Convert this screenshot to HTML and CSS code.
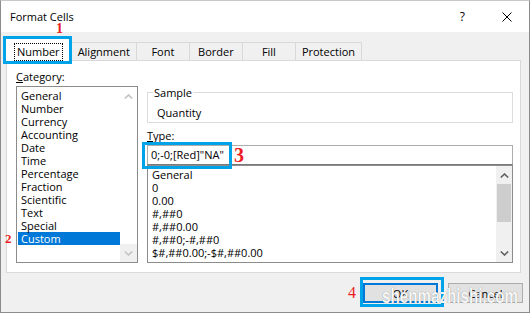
FILE: index.html
```html
<!DOCTYPE html>
<html lang="en">
<head>
    <meta charset="UTF-8">
    <meta name="viewport" content="width=device-width, initial-scale=1.0">
    <title>Format Cells</title>
    <link rel="stylesheet" href="styles.css">
</head>
<body>
    <div class="dialog">
        <div class="titlebar">
            <span class="title">Format Cells</span>
            <span class="help">?</span>
            <svg class="close" width="10" height="10" viewBox="0 0 10 10">
                <path d="M0.5 0.5 L9.5 9.5 M9.5 0.5 L0.5 9.5" stroke="#000" stroke-width="1" fill="none"/>
            </svg>
        </div>

        <div class="tabstrip">
            <div class="tab active"><span class="focus">Number</span></div>
            <div class="tab">Alignment</div>
            <div class="tab">Font</div>
            <div class="tab">Border</div>
            <div class="tab">Fill</div>
            <div class="tab">Protection</div>
        </div>

        <div class="panel">
            <div class="col-left">
                <div class="label"><u>C</u>ategory:</div>
                <div class="listbox category">
                    <ul class="items">
                        <li>General</li>
                        <li>Number</li>
                        <li>Currency</li>
                        <li>Accounting</li>
                        <li>Date</li>
                        <li>Time</li>
                        <li>Percentage</li>
                        <li>Fraction</li>
                        <li>Scientific</li>
                        <li>Text</li>
                        <li>Special</li>
                        <li class="selected">Custom</li>
                    </ul>
                    <div class="scrollbar disabled">
                        <div class="arrow">
                            <svg width="9" height="5" viewBox="0 0 9 5"><path d="M0.8 4.5 L4.5 1 L8.2 4.5" stroke="#c2c2c2" stroke-width="1.6" fill="none"/></svg>
                        </div>
                        <div class="track"></div>
                        <div class="arrow down">
                            <svg width="9" height="5" viewBox="0 0 9 5"><path d="M0.8 0.5 L4.5 4 L8.2 0.5" stroke="#c2c2c2" stroke-width="1.6" fill="none"/></svg>
                        </div>
                    </div>
                </div>
            </div>

            <div class="col-right">
                <fieldset class="sample">
                    <legend>Sample</legend>
                    <div class="sample-value">Quantity</div>
                </fieldset>
                <div class="label type-label"><u>T</u>ype:</div>
                <div class="type-input">0;-0;[Red]"NA"</div>
                <div class="listbox formats">
                    <ul class="items">
                        <li>General</li>
                        <li>0</li>
                        <li>0.00</li>
                        <li>#,##0</li>
                        <li>#,##0.00</li>
                        <li>#,##0;-#,##0</li>
                        <li>$#,##0.00;-$#,##0.00</li>
                    </ul>
                    <div class="scrollbar">
                        <div class="arrow">
                            <svg width="9" height="5" viewBox="0 0 9 5"><path d="M0.8 4.5 L4.5 1 L8.2 4.5" stroke="#606060" stroke-width="1.6" fill="none"/></svg>
                        </div>
                        <div class="thumb"></div>
                        <div class="track"></div>
                        <div class="arrow">
                            <svg width="9" height="5" viewBox="0 0 9 5"><path d="M0.8 0.5 L4.5 4 L8.2 0.5" stroke="#606060" stroke-width="1.6" fill="none"/></svg>
                        </div>
                    </div>
                </div>
            </div>
        </div>

        <div class="buttons">
            <button class="btn default">OK</button>
            <button class="btn">Cancel</button>
        </div>

        <!-- annotations drawn over the dialog -->
        <div class="mark mark-tab"></div>
        <div class="mark mark-type"></div>
        <div class="mark mark-ok"></div>
        <span class="step step-1">1</span>
        <span class="step step-2">2</span>
        <span class="step step-3">3</span>
        <span class="step step-4">4</span>
        <span class="watermark">shenmazhishi.com</span>
    </div>
</body>
</html>
```

FILE: styles.css
```css
body {
    margin: 0;
    background: #fff;
}
.dialog {
    position: relative;
    width: 530px;
    height: 313px;
    box-sizing: border-box;
    border: 1px solid #8c8c8c;
    border-top-color: #c8c8c8;
    background: #f0f0f0;
    font-family: "Open Sans", "Noto Sans", sans-serif;
    font-size: 11px;
    color: #000;
    display: flex;
    flex-direction: column;
    overflow: hidden;
}

/* title bar */
.titlebar {
    height: 31px;
    flex: none;
    background: #fff;
    display: flex;
    align-items: center;
    padding-left: 9px;
}
.help {
    margin-left: auto;
    font-size: 12px;
}
.close {
    margin-left: 37px;
    margin-right: 17px;
}

/* tabs */
.tabstrip {
    height: 28px;
    flex: none;
    display: flex;
    align-items: flex-end;
    padding-left: 4px;
}
.tab {
    height: 18px;
    line-height: 18px;
    min-width: 53px;
    padding: 0 6px;
    box-sizing: border-box;
    text-align: center;
    border: 1px solid #d9d9d9;
    border-bottom: none;
    border-left: none;
}
.tab.active {
    height: 23px;
    line-height: 16px;
    padding: 4px 8px 0;
    margin-bottom: -1px;
    border-left: 1px solid #d9d9d9;
    background: #fff;
    position: relative;
    z-index: 1;
}
.focus {
    display: inline-block;
    padding: 0 2px;
    border: 1px dotted #000;
}

/* main panel */
.panel {
    height: 213px;
    flex: none;
    margin: 0 8px 0 5px;
    box-sizing: border-box;
    background: #fff;
    border: 1px solid #d9d9d9;
    padding: 9px 7px 0 9px;
    display: flex;
    gap: 9px;
}
.label {
    line-height: 14px;
}
.col-left {
    width: 122px;
    flex: none;
}
.col-right {
    flex: 1;
    display: flex;
    flex-direction: column;
}

.listbox {
    display: flex;
    box-sizing: border-box;
    border: 1px solid #8c8c8c;
    background: #fff;
}
.listbox .items {
    list-style: none;
    margin: 0;
    padding: 2px 0 0 0;
    flex: 1;
    line-height: 13px;
}
.category {
    margin-top: 2px;
    height: 177px;
}
.category li {
    margin-left: 1px;
    padding-left: 3px;
}
.category li.selected {
    background: #0078d7;
    color: #fff;
}
.scrollbar {
    width: 16px;
    flex: none;
    display: flex;
    flex-direction: column;
    background: #f0f0f0;
}
.scrollbar.disabled {
    width: 17px;
    background: #fff;
}
.arrow {
    height: 18px;
    display: flex;
    align-items: center;
    justify-content: center;
}
.scrollbar.disabled .arrow.down {
    background: #f0f0f0;
}
.track {
    flex: 1;
}
.thumb {
    height: 38px;
    margin: 0 1px;
    background: #cdcdcd;
}

.sample {
    margin: 16px 0 0 0;
    padding: 7px 6px 2px 5px;
    border: 1px solid #dcdcdc;
    min-width: 0;
}
.sample legend {
    padding: 0 1px;
    line-height: 13px;
}
.sample-value {
    line-height: 14px;
    padding-left: 4px;
}
.type-label {
    margin-top: 6px;
}
.type-input {
    margin-top: 2px;
    height: 20px;
    line-height: 18px;
    box-sizing: border-box;
    border: 1px solid #adadad;
    border-bottom-color: #7a7a7a;
    padding-left: 3px;
}
.formats {
    height: 98px;
}
.formats li {
    padding-left: 4px;
}

/* buttons */
.buttons {
    flex: 1;
    display: flex;
    justify-content: flex-end;
    align-items: flex-start;
    gap: 10px;
    padding: 10px 6px 0 0;
}
.btn {
    width: 75px;
    height: 20px;
    box-sizing: border-box;
    background: #e1e1e1;
    border: 1px solid #adadad;
    font-family: inherit;
    font-size: 11px;
    padding: 0;
    color: #000;
}
.btn.default {
    border: 2px solid #0078d7;
}

/* annotations */
.mark {
    position: absolute;
    box-sizing: border-box;
    border: 3px solid #00a2e8;
    z-index: 2;
}
.mark-tab {
    left: 2px;
    top: 35px;
    width: 69px;
    height: 28px;
}
.mark-type {
    left: 141px;
    top: 141px;
    width: 90px;
    height: 27px;
}
.mark-ok {
    left: 359px;
    top: 276px;
    width: 84px;
    height: 30px;
}
.step {
    position: absolute;
    font-family: "Liberation Serif", serif;
    font-weight: bold;
    line-height: 1;
    color: #ed1c24;
    z-index: 3;
}
.step-1 {
    left: 55px;
    top: 21px;
    font-size: 14px;
}
.step-2 {
    left: 4px;
    top: 231px;
    font-size: 13px;
}
.step-3 {
    left: 233px;
    top: 144px;
    font-size: 20px;
}
.step-4 {
    left: 347px;
    top: 284px;
    font-size: 16px;
    font-weight: normal;
}
.watermark {
    position: absolute;
    left: 381px;
    top: 282px;
    line-height: 26px;
    font-family: "Liberation Sans", sans-serif;
    font-weight: bold;
    font-size: 20px;
    color: rgba(255, 255, 255, 0.95);
    text-shadow: 0 0 1px rgba(0, 0, 0, 0.45);
    transform: scaleX(0.76);
    transform-origin: left center;
    white-space: nowrap;
    z-index: 3;
}
```
